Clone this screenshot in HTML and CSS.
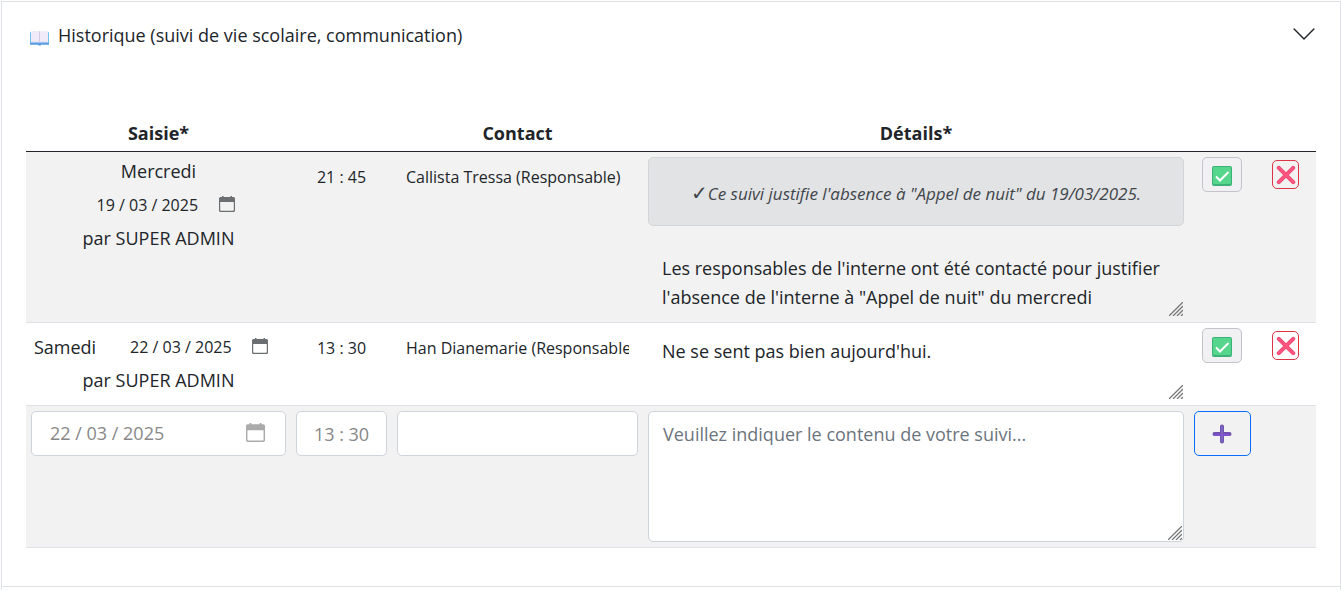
FILE: index.html
```html
<!DOCTYPE html>
<html lang="fr">
<head>
<meta charset="utf-8">
<title>Historique</title>
<link rel="stylesheet" href="styles.css">
</head>
<body>
<svg class="sprite" aria-hidden="true">
  <symbol id="calendar" viewBox="0 0 16 16">
    <path fill="currentColor" d="M3 0h1.500v1h7V0H13v1h1.500Q16 1 16 2.500V14.500Q16 16 14.500 16H1.500Q0 16 0 14.500V2.500Q0 1 1.500 1H3zM1.200 6v8q0 .8.8.8h12q.8 0 .8-.8V6z"/>
  </symbol>
  <symbol id="check" viewBox="0 0 20 20">
    <rect width="20" height="20" rx="2" fill="#3cb278"/>
    <rect x="1" y="1" width="18" height="17" rx="1" fill="#55d68c"/>
    <path d="M4 10.500l4 4L16.500 6" fill="none" stroke="#fff" stroke-width="2"/>
  </symbol>
  <symbol id="cross" viewBox="0 0 20 20">
    <path d="M2.800 2.800l14.400 14.400M17.200 2.800L2.800 17.200" fill="none" stroke="#e8456f" stroke-width="4" stroke-linecap="round"/>
    <path d="M2.800 2.800l14.400 14.400M17.200 2.800L2.800 17.200" fill="none" stroke="#ff5580" stroke-width="2.600" stroke-linecap="round"/>
  </symbol>
  <symbol id="grip" viewBox="0 0 14 14">
    <path d="M0 14L14 0M4 14L14 4M8 14l6-6M12 14l2-2" fill="none" stroke="#777" stroke-width="1.300"/>
  </symbol>
</svg>
<main class="accordion">
  <section class="item">
    <h2 class="item-title">
      <button class="toggle" type="button" aria-expanded="true">
        <svg class="book" viewBox="0 0 20 16" aria-hidden="true">
          <path fill="#6cc0ea" d="M0 2h20v12H0z"/>
          <path fill="#5a9ce6" d="M0 13h20v2h-8.500v1h-3v-1H0z"/>
          <path fill="#f1ebf9" d="M1 1q5-1 9 0 4-1 9 0v11.500H1z"/>
          <path fill="#d3cae6" d="M9.500 1h1v12h-1zM1 12h18v.6H1z"/>
        </svg>
        <span class="toggle-text">Historique (suivi de vie scolaire, communication)</span>
        <svg class="chevron" viewBox="0 0 20 20" aria-hidden="true"><path d="M1 5.500l9 9 9-9" fill="none" stroke="#212529" stroke-width="1.300" stroke-linecap="round" stroke-linejoin="round"/></svg>
      </button>
    </h2>
    <div class="item-body">
      <table class="log">
        <colgroup><col class="c-date"><col class="c-time"><col class="c-contact"><col><col class="c-save"><col class="c-delete"></colgroup>
        <thead>
          <tr><th>Saisie*</th><th></th><th>Contact</th><th>Détails*</th><th></th><th></th></tr>
        </thead>
        <tbody>
          <tr class="odd">
            <td>
              <div class="entry">
                <label for="d1">Mercredi</label>
                <span class="date"><input id="d1" type="text" value="19 / 03 / 2025"><svg class="cal"><use href="#calendar"/></svg></span>
                <span class="author">par SUPER ADMIN</span>
              </div>
            </td>
            <td><input class="plain time" type="text" aria-label="Heure" value="21 : 45"></td>
            <td><input class="plain" type="text" aria-label="Contact" value="Callista Tressa (Responsable)"></td>
            <td>
              <div class="notice"><span class="tick">✓</span><em>Ce suivi justifie l'absence à "Appel de nuit" du 19/03/2025.</em></div>
              <div class="area"><textarea class="plain-area" aria-label="Détails">Les responsables de l'interne ont été contacté pour justifier l'absence de l'interne à "Appel de nuit" du mercredi</textarea><svg class="grip"><use href="#grip"/></svg></div>
            </td>
            <td class="action"><button class="save" type="button" aria-label="Enregistrer"><svg><use href="#check"/></svg></button></td>
            <td class="action"><button class="delete" type="button" aria-label="Supprimer"><svg><use href="#cross"/></svg></button></td>
          </tr>
          <tr>
            <td>
              <div class="entry">
                <label for="d2">Samedi</label>
                <span class="date"><input id="d2" type="text" value="22 / 03 / 2025"><svg class="cal"><use href="#calendar"/></svg></span>
                <span class="author">par SUPER ADMIN</span>
              </div>
            </td>
            <td><input class="plain time" type="text" aria-label="Heure" value="13 : 30"></td>
            <td><input class="plain" type="text" aria-label="Contact" value="Han Dianemarie (Responsable)"></td>
            <td>
              <div class="area"><textarea class="plain-area" aria-label="Détails">Ne se sent pas bien aujourd'hui.</textarea><svg class="grip"><use href="#grip"/></svg></div>
            </td>
            <td class="action"><button class="save" type="button" aria-label="Enregistrer"><svg><use href="#check"/></svg></button></td>
            <td class="action"><button class="delete" type="button" aria-label="Supprimer"><svg><use href="#cross"/></svg></button></td>
          </tr>
          <tr class="odd">
            <td><span class="field new-date"><input type="text" aria-label="Date" value="22 / 03 / 2025"><svg class="cal"><use href="#calendar"/></svg></span></td>
            <td><input class="field time new-time" type="text" aria-label="Heure" value="13 : 30"></td>
            <td><input class="field" type="text" aria-label="Contact"></td>
            <td>
              <div class="area"><textarea class="field new-area" aria-label="Détails" placeholder="Veuillez indiquer le contenu de votre suivi..."></textarea><svg class="grip inset"><use href="#grip"/></svg></div>
            </td>
            <td class="action"><button class="add" type="button" aria-label="Ajouter"><svg viewBox="0 0 20 20">
              <path d="M10 2.500v15M2.500 10h15" fill="none" stroke="#6f50ae" stroke-width="4" stroke-linecap="round"/>
              <path d="M10 3v14" fill="none" stroke="#7a66bd" stroke-width="2.400" stroke-linecap="round"/>
              <path d="M2.500 11h15" fill="none" stroke="#8452dc" stroke-width="1.600" stroke-linecap="round"/></svg></button></td>
            <td></td>
          </tr>
        </tbody>
      </table>
    </div>
  </section>
  <section class="item"><div class="next"></div></section>
</main>
</body>
</html>
```
FILE: styles.css
```css
* { box-sizing: border-box; }
body {
  margin: 0;
  padding: 1px 0 0 1px;
  background: #fff;
  color: #212529;
  font: 18px/29px "Open Sans", "Noto Sans", sans-serif;
}
button, input, textarea { font: inherit; color: inherit; margin: 0; }
.sprite { display: none; }
.item { border: 1px solid #dee2e6; }
.item + .item { border-top: 0; border-bottom: 0; }
.next { height: 3px; }
.item-title { margin: 0; font-size: 18px; font-weight: 400; }
.toggle {
  display: flex;
  align-items: center;
  width: 100%;
  padding: 19px 25px 19px 28px;
  border: 0;
  background: none;
  text-align: left;
}
.toggle-text { flex: 1; }
.book { width: 19px; height: 16px; margin: 4px 9px 0 0; }
.chevron { width: 22px; height: 22px; margin-bottom: 4px; }
.item-body { padding: 46px 24px 38px; }

.log { width: 100%; table-layout: fixed; border-collapse: separate; border-spacing: 0; }
.c-date { width: 265px; }
.c-time { width: 101px; }
.c-contact { width: 251px; }
.c-save { width: 66px; }
.c-delete { width: 61px; }
th { height: 37px; padding: 0; border-bottom: 1px solid #212529; font-size: 18px; font-weight: 700; }
td { padding: 5px; border-bottom: 1px solid #dee2e6; vertical-align: top; }
.odd td { background: #f2f2f2; }

.entry { display: flex; flex-wrap: wrap; justify-content: center; align-items: center; column-gap: 5px; }
.date { display: flex; align-items: center; width: 182px; height: 38px; padding: 0 15px 0 29px; }
.date input { flex: 1; min-width: 0; padding: 0; border: 0; background: none; font-size: 16px; }
.cal { width: 16px; height: 16px; color: #6c6f72; margin-bottom: 2px; }
.author { width: 100%; text-align: center; }

.plain { display: block; width: 100%; height: 39px; padding: 0 9px; border: 0; background: none; font-size: 16px; }
.time { text-align: center; }

.notice {
  display: flex;
  align-items: center;
  justify-content: center;
  margin-bottom: 19px;
  padding: 21px 9px 17px;
  border: 1px solid #d3d6d8;
  border-radius: 5px;
  background: #e2e3e5;
  color: #41464b;
  font-size: 17px;
}
.tick { font-family: "DejaVu Sans", sans-serif; font-size: 20px; }
.area { position: relative; }
textarea { display: block; width: 100%; resize: none; overflow: hidden; }
.plain-area { height: 72px; padding: 9px 14px 0; border: 0; background: none; }
.grip { position: absolute; right: 1px; bottom: 1px; width: 14px; height: 14px; }
.grip.inset { right: 2px; bottom: 2px; }

.field {
  display: block;
  width: 100%;
  height: 45px;
  padding: 0 14px;
  border: 1px solid #ced4da;
  border-radius: 5px;
  background: #fff;
}
.new-date { display: flex; align-items: center; padding: 0 20px 0 18px; color: #888; }
.new-date input { flex: 1; min-width: 0; padding: 0; border: 0; background: none; }
.new-date .cal { width: 19px; height: 19px; color: #aaa; }
.new-time { color: #888; padding: 0; }
.new-area { height: 131px; padding: 8px 14px; }
.new-area::placeholder { color: #6c757d; opacity: 1; }

.action { padding-left: 0; padding-right: 0; text-align: center; }
.action button { display: inline-flex; align-items: center; justify-content: center; padding: 0; border-radius: 5px; vertical-align: top; background: none; }
.action svg { width: 20px; height: 20px; }
.action .save { width: 40px; height: 35px; border: 1px solid #c3c3cb; background: #f1f1f4; }
.action .save svg { margin-top: 3px; }
.action .delete { width: 27px; height: 29px; margin-top: 3px; border: 1px solid #dc3545; }
.action .add { width: 57px; height: 45px; border: 1px solid #0d6efd; }
```
